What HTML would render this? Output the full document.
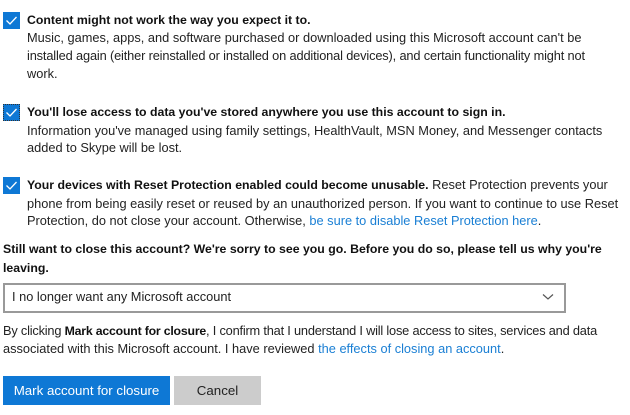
<!DOCTYPE html>
<html><head><style>
body{margin:0;width:630px;height:415px;background:#fff;font-family:"Liberation Sans",sans-serif;font-size:12.8px;color:#222;position:relative;overflow:hidden}
.l{position:absolute;white-space:nowrap;line-height:18px}
b{font-weight:bold;color:#111;font-size:12.3px}
a{color:#1a7fd4;text-decoration:none}
.cb{position:absolute;left:3px;width:17px;height:17px;background:#0e78d5}
.cb svg{position:absolute;left:0;top:0}
</style></head><body>
<div class="cb" style="top:12px"><svg width="17" height="17"><path d="M3.5 8.5 L7 12 L13.5 5" stroke="#fff" stroke-width="1.3" fill="none"/></svg></div>
<div class="l" style="left:27px;top:11px"><b>Content might not work the way you expect it to.</b></div>
<div class="l" style="left:27px;top:29px">Music, games, apps, and software purchased or downloaded using this Microsoft account can't be</div>
<div class="l" style="left:27px;top:47px;letter-spacing:-0.15px">installed again (either reinstalled or installed on additional devices), and certain functionality might not</div>
<div class="l" style="left:27px;top:65px">work.</div>

<div class="cb" style="top:104px;outline:1px dotted #333;outline-offset:-1px"><svg width="17" height="17"><path d="M3.5 8.5 L7 12 L13.5 5" stroke="#fff" stroke-width="1.3" fill="none"/></svg></div>
<div class="l" style="left:27px;top:103px"><b>You'll lose access to data you've stored anywhere you use this account to sign in.</b></div>
<div class="l" style="left:27px;top:122px">Information you've managed using family settings, HealthVault, MSN Money, and Messenger contacts</div>
<div class="l" style="left:27px;top:139px">added to Skype will be lost.</div>

<div class="cb" style="top:177px"><svg width="17" height="17"><path d="M3.5 8.5 L7 12 L13.5 5" stroke="#fff" stroke-width="1.3" fill="none"/></svg></div>
<div class="l" style="left:27px;top:176px"><b>Your devices with Reset Protection enabled could become unusable.</b> Reset Protection prevents your</div>
<div class="l" style="left:27px;top:195px">phone from being easily reset or reused by an unauthorized person. If you want to continue to use Reset</div>
<div class="l" style="left:27px;top:212px">Protection, do not close your account. Otherwise, <a>be sure to disable Reset Protection here</a>.</div>

<div class="l" style="left:3px;top:240px"><b>Still want to close this account? We're sorry to see you go. Before you do so, please tell us why you're</b></div>
<div class="l" style="left:3px;top:259px"><b>leaving.</b></div>

<div style="position:absolute;left:3px;top:283px;width:559px;height:26px;border:2px solid #999;box-sizing:content-box"></div>
<div class="l" style="left:12px;top:288px">I no longer want any Microsoft account</div>
<svg style="position:absolute;left:542px;top:293px" width="12" height="8"><path d="M1 1.5 L6 6 L11 1.5" stroke="#555" stroke-width="1.2" fill="none"/></svg>

<div class="l" style="left:3px;top:322px;letter-spacing:-0.2px">By clicking <b>Mark account for closure</b>, I confirm that I understand I will lose access to sites, services and data</div>
<div class="l" style="left:3px;top:340px">associated with this Microsoft account. I have reviewed <a>the effects of closing an account</a>.</div>

<div style="position:absolute;left:3px;top:376px;width:167px;height:29px;background:#0e78d5;color:#fff;text-align:center;line-height:29px;font-size:13.3px">Mark account for closure</div>
<div style="position:absolute;left:174px;top:376px;width:87px;height:29px;background:#ccc;color:#222;text-align:center;line-height:29px;font-size:13.3px">Cancel</div>
</body></html>
